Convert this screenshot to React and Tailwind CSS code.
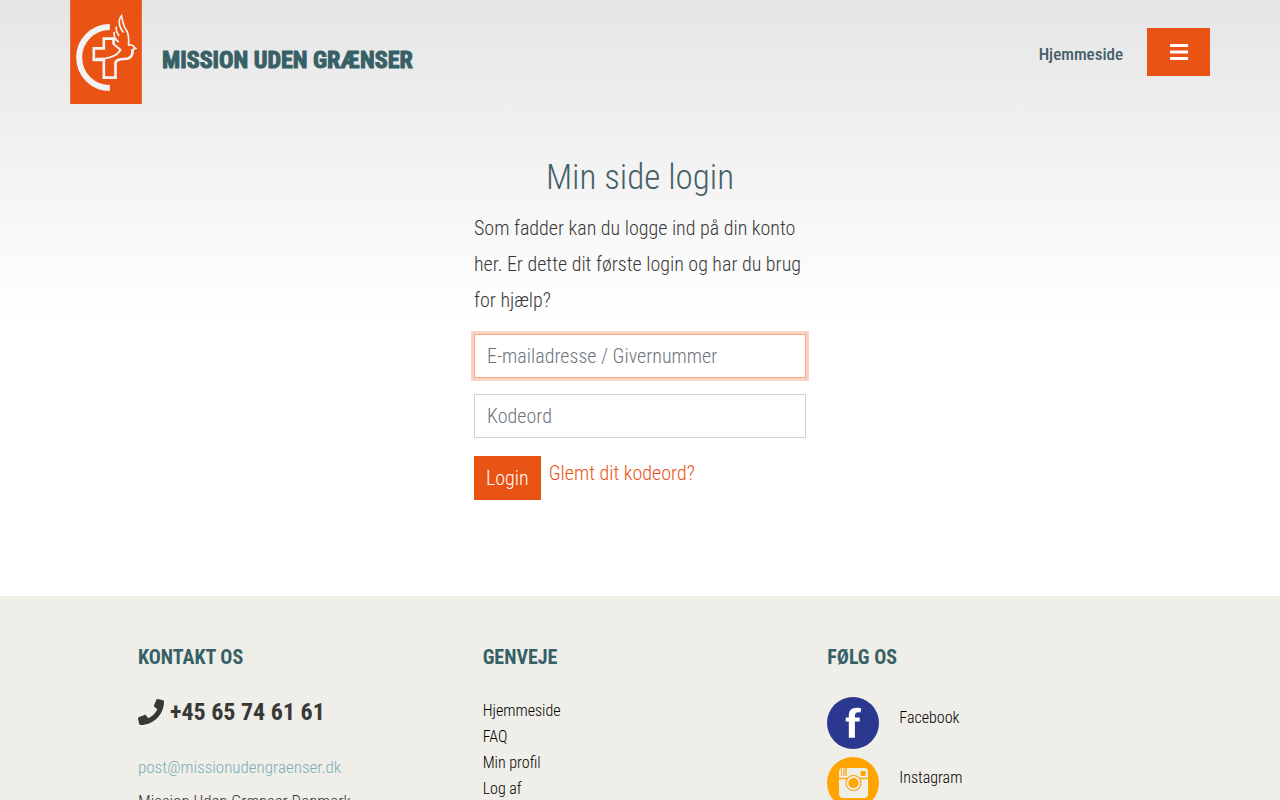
import React, { useState } from "react";

const shortcuts = ["Hjemmeside", "FAQ", "Min profil", "Log af"];

const Logo = () => (
  <svg viewBox="30 0 215 312" className="h-[104px] w-[72px]" aria-hidden="true">
    <rect x="30" y="0" width="215" height="312" fill="#e95314" />
    <g fill="none" stroke="#f3f3f3">
      <path d="M149 81A92 91.500 0 0 0 149 264" strokeWidth="18" />
      <path
        d="M160 132V116H131V145H101V180H131V233H166V187C170 179 178 177 190 177C212 178 219 166 217 147"
        strokeWidth="8"
      />
      <path d="M106 176C142 179 172 168 181 149L159 131" strokeWidth="6" />
      <path
        d="M217 149L226 145C220 142 220 136 214 135C209 134 207 137 205 134C207 111 205 99 197 88C189 76 187 62 184 47C175 58 176 72 181 83C184 91 189 94 190 98"
        strokeWidth="5"
      />
      <path d="M169 80C165 90 170 98 177 108M162 96C160 111 166 120 176 126" strokeWidth="5" />
    </g>
  </svg>
);

const FacebookIcon = () => (
  <svg viewBox="0 0 52 52" className="size-[52px]" aria-hidden="true">
    <circle cx="26" cy="26" r="26" fill="#2b388f" />
    <path
      d="M21.800 40.800V24.500H18.700V20.500H21.800V18.500C21.800 13.500 24.800 10.800 29.500 10.800C31.500 10.800 33.300 11.200 34.300 11.600L33.500 15.500C29.800 14.500 27.900 15.800 27.900 18.800V20.500H32.700V24.500H27.900V40.800Z"
      fill="#fff"
    />
  </svg>
);

const InstagramIcon = () => (
  <svg viewBox="0 0 52 52" className="size-[52px]" aria-hidden="true">
    <circle cx="26" cy="26" r="26" fill="#ffa400" />
    <rect x="12" y="11" width="29" height="30" rx="4" fill="#efeee8" />
    <path d="M14.500 12V19M16.500 11.500V19" stroke="#ffa400" strokeWidth=".8" />
    <rect x="17.500" y="11" width="2.500" height="8" fill="#ffa400" opacity=".7" />
    <rect x="33.500" y="14" width="5" height="5" rx="1" fill="#ffa400" />
    <path d="M12 21.500H41" stroke="#ffa400" strokeWidth="1.500" />
    <circle cx="26.500" cy="26" r="8" fill="#ffa400" />
    <circle cx="26.500" cy="26" r="6" fill="none" stroke="#efeee8" strokeWidth="1.800" />
  </svg>
);

const PhoneIcon = () => (
  <svg viewBox="0 0 512 512" className="size-[26px]" fill="currentColor" aria-hidden="true">
    <path d="M493.400 24.600l-104-24c-11.300-2.600-22.900 3.300-27.500 13.900l-48 112c-4.200 9.800-1.400 21.300 6.900 28l60.600 49.600c-36 76.700-98.900 140.500-177.200 177.200l-49.600-60.600c-6.800-8.300-18.200-11.100-28-6.900l-112 48C3.900 366.500-2 378.100.6 389.400l24 104C27.100 504.200 36.700 512 48 512c256.100 0 464-207.500 464-464 0-11.200-7.700-20.900-18.600-23.400z" />
  </svg>
);

const Header = () => (
  <header className="mx-auto flex w-full max-w-[1140px] items-start justify-between">
    <a href="#" className="flex items-center gap-5" aria-label="Mission Uden Grænser">
      <Logo />
      <span className="pt-4 text-2xl leading-7 font-bold text-[#376066] uppercase [-webkit-text-stroke:1px_#376066]">
        Mission uden grænser
      </span>
    </a>
    <nav className="flex items-center gap-6 pt-7">
      <a href="#" className="pt-1 text-[17px] leading-7 font-medium text-[#456069]">
        Hjemmeside
      </a>
      <button
        type="button"
        aria-label="Menu"
        className="flex h-12 w-[63px] items-center justify-center bg-[#e95314] text-white"
      >
        <svg viewBox="0 0 18 16" className="h-4 w-[18px]" fill="currentColor" aria-hidden="true">
          <rect width="18" height="3" rx=".5" />
          <rect y="6.500" width="18" height="3" rx=".5" />
          <rect y="13" width="18" height="3" rx=".5" />
        </svg>
      </button>
    </nav>
  </header>
);

const inputClass =
  "block h-11 w-full border bg-white px-3 text-xl font-light placeholder:text-[#6c757d] outline-none border-[#ced4da] focus:border-[#f6a585] focus:ring-3 focus:ring-[#e95314]/25";

const LoginForm = () => {
  const [user, setUser] = useState("");
  const [password, setPassword] = useState("");

  return (
    <form className="mx-auto w-full max-w-[332px]" onSubmit={(e) => e.preventDefault()}>
      <h1 className="text-center text-[35px] leading-[52px] font-light text-[#456069]">
        Min side login
      </h1>
      <p className="pt-1.5 text-xl leading-9 font-light text-[#383838]">
        Som fadder kan du logge ind på din konto her. Er dette dit første login og har du brug for
        hjælp?
      </p>
      <div className="flex flex-col gap-4 pt-4">
        <input
          type="text"
          aria-label="E-mailadresse / Givernummer"
          placeholder="E-mailadresse / Givernummer"
          value={user}
          onChange={(e) => setUser(e.target.value)}
          autoFocus
          className={inputClass}
        />
        <input
          type="password"
          aria-label="Kodeord"
          placeholder="Kodeord"
          value={password}
          onChange={(e) => setPassword(e.target.value)}
          className={inputClass}
        />
      </div>
      <div className="flex items-start gap-2 pt-[18px]">
        <button type="submit" className="h-11 bg-[#e95314] px-3 text-xl font-light text-white">
          Login
        </button>
        <a href="#" className="text-xl leading-[34px] font-light text-[#e95314]">
          Glemt dit kodeord?
        </a>
      </div>
    </form>
  );
};

const FooterHeading = ({ children }) => (
  <h2 className="text-xl leading-[34px] font-bold text-[#376066] uppercase">{children}</h2>
);

const Footer = () => (
  <footer className="bg-[#efeee8] pt-11 pb-12">
    <div className="mx-auto grid w-full max-w-[1034px] grid-cols-3">
      <div className="px-[15px]">
        <FooterHeading>Kontakt os</FooterHeading>
        <div className="flex items-center gap-1.5 pt-[18px] text-2xl leading-10 font-bold text-[#383838]">
          <PhoneIcon />
          +45 65 74 61 61
        </div>
        <div className="pt-[18px] text-[17px] leading-[34px] font-light text-[#383838]">
          <a href="mailto:post@missionudengraenser.dk" className="text-[#79aeb8]">
            post@missionudengraenser.dk
          </a>
          <p>Mission Uden Grænser Danmark</p>
        </div>
      </div>
      <div className="px-[15px]">
        <FooterHeading>Genveje</FooterHeading>
        <ul className="pt-6 text-base leading-[26px] text-black">
          {shortcuts.map((name) => (
            <li key={name}>
              <a href="#" className="font-light">
                {name}
              </a>
            </li>
          ))}
        </ul>
      </div>
      <div className="px-[15px]">
        <FooterHeading>Følg os</FooterHeading>
        <div className="flex flex-col gap-2 pt-[23px] text-base font-light text-black">
          <a href="#" className="flex items-start gap-5 leading-[42px]">
            <FacebookIcon />
            Facebook
          </a>
          <a href="#" className="flex items-start gap-5 leading-[42px]">
            <InstagramIcon />
            Instagram
          </a>
        </div>
      </div>
    </div>
  </footer>
);

const App = () => (
  <div className="bg-white font-['Roboto_Condensed','Liberation_Sans_Narrow',sans-serif]">
    <div className="bg-[linear-gradient(#e4e5e7,#ececec_80px,#ffffff_320px)]">
      <Header />
      <main className="pt-12 pb-24">
        <LoginForm />
      </main>
    </div>
    <Footer />
  </div>
);

export default App;
